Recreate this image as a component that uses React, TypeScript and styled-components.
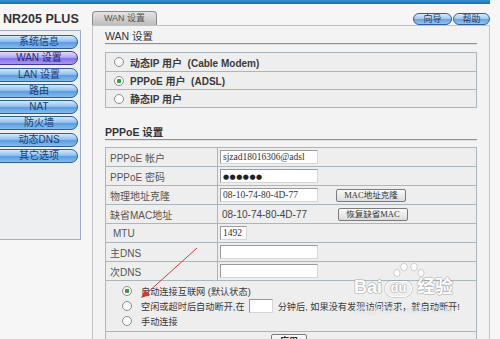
import React from 'react';
import styled, { createGlobalStyle, css } from 'styled-components';

const GlobalStyle = createGlobalStyle`
  html, body {
    margin: 0;
    padding: 0;
    background: #f6f6f6;
    overflow: hidden;
  }
  body {
    font-family: "Liberation Sans", Arial, "Noto Sans CJK SC", sans-serif;
    color: #333;
  }
`;

const Page = styled.div`
  position: relative;
  width: 500px;
  height: 339px;
  overflow: hidden;
`;

const TopBar = styled.div`
  width: 490px;
  height: 4px;
  background: linear-gradient(#3593d3, #1570b0);
`;

const Body = styled.div`
  display: flex;
`;

const Sidebar = styled.div`
  width: 92px;
  flex-shrink: 0;
`;

const Brand = styled.div`
  padding: 8px 0 0 3px;
  height: 15px;
  font-size: 12.5px;
  font-weight: 700;
  line-height: 15px;
  color: #333;
`;

const MenuPanel = styled.div`
  margin-top: 3px;
  width: 81px;
  height: 210px;
  padding-top: 4px;
  box-sizing: border-box;
  border: 1px solid #9fb0c8;
  border-left: none;
  background: #eeeff1;
  display: flex;
  flex-direction: column;
  gap: 2.3px;
`;

const MenuButton = styled.div<{ $active?: boolean }>`
  margin-left: -12px;
  width: 90px;
  height: 14px;
  box-sizing: border-box;
  border: 1px solid #2d5f9e;
  border-radius: 7px;
  background: linear-gradient(#d6e9fb, #8fc0ee 45%, #5c9ddf 55%, #87bbec);
  font-size: 10px;
  line-height: 12px;
  text-align: center;
  padding-left: 12px;
  color: #1c3f78;
  ${(p) =>
    p.$active &&
    css`
      border-color: #4035a0;
      background: linear-gradient(#e2dcfb, #b3a6f2 45%, #8271e6 55%, #a99bf0);
      color: #2c2270;
    `}
`;

const Main = styled.div`
  width: 398px;
  display: flex;
  flex-direction: column;
`;

const MainHeader = styled.div`
  height: 21px;
  display: flex;
  align-items: flex-end;
  justify-content: space-between;
`;

const Tab = styled.div`
  width: 65px;
  height: 14px;
  box-sizing: border-box;
  border: 1px solid #8a8a8a;
  border-bottom: none;
  border-radius: 4px 4px 0 0;
  background: linear-gradient(#e4e4e4, #bdbdbd);
  font-size: 9px;
  line-height: 13px;
  text-align: center;
  color: #555;
`;

const Tools = styled.div`
  display: flex;
  gap: 1px;
`;

const PillButton = styled.div<{ $w: number }>`
  width: ${(p) => p.$w}px;
  height: 12px;
  box-sizing: border-box;
  border: 1px solid #2d5f9e;
  border-radius: 6px;
  background: linear-gradient(#dcecfb, #9cc7f0 50%, #6aa5e2 55%, #93c2ef);
  font-size: 9px;
  line-height: 10px;
  text-align: center;
  color: #233c6c;
`;

const ContentBox = styled.div`
  height: 320px;
  box-sizing: border-box;
  border: 1px solid #c2c2c2;
  background: #f3f3f3;
  padding: 0 12px;
`;

const SectionTitle = styled.div<{ $bold?: boolean }>`
  padding-top: 4px;
  height: 13px;
  line-height: 13px;
  font-size: 10.5px;
  font-weight: ${(p) => (p.$bold ? 700 : 400)};
  color: #333;
  border-bottom: 2px groove #e2e2e2;
`;

const RadioBox = styled.div`
  margin-top: 7px;
  border: 1px solid #a9b6be;
  background: #eeeeee;
`;

const RadioRow = styled.div`
  height: 18px;
  box-sizing: border-box;
  display: flex;
  align-items: center;
  gap: 6px;
  padding-left: 8px;
  font-size: 10px;
  font-weight: 700;
  color: #3a3a3a;
  & + & {
    border-top: 1px solid #a9b6be;
  }
`;

const Radio = styled.span<{ $checked?: boolean }>`
  width: 8px;
  height: 8px;
  border-radius: 50%;
  border: 1px solid #8c8c8c;
  background: radial-gradient(circle, ${(p) => (p.$checked ? '#3a9a4a 0 2px' : '#fff 0 2px')}, #fff 2.5px);
  flex-shrink: 0;
`;

const PPPoETitle = styled(SectionTitle)`
  margin-top: 14px;
`;

const Table = styled.div`
  margin-top: 6px;
  border: 1px solid #a9b6be;
  border-bottom: none;
  background: #eeeeee;
`;

const Row = styled.div`
  height: 18px;
  display: grid;
  grid-template-columns: 112px 1fr;
  border-bottom: 1px solid #a9b6be;
`;

const Label = styled.div<{ $indent?: number }>`
  display: flex;
  align-items: center;
  padding-left: ${(p) => p.$indent ?? 4}px;
  border-right: 1px solid #a9b6be;
  font-size: 10px;
  color: #555;
`;

const Cell = styled.div`
  display: flex;
  align-items: center;
  padding-left: 2px;
  font-size: 10px;
  color: #444;
`;

const TextInput = styled.div<{ $w: number }>`
  width: ${(p) => p.$w}px;
  height: 14px;
  box-sizing: border-box;
  border: 1px solid #9a9a9a;
  border-right-color: #d6d6d6;
  border-bottom-color: #d6d6d6;
  background: #fff;
  font-family: "Liberation Serif", "Times New Roman", serif;
  font-size: 9.5px;
  line-height: 12px;
  padding-left: 2px;
  color: #333;
  flex-shrink: 0;
  white-space: nowrap;
  overflow: hidden;
`;

const Dots = styled.span`
  font-family: "DejaVu Sans", sans-serif;
  font-size: 7px;
  letter-spacing: 0.5px;
  font-weight: 700;
  color: #222;
`;

const GrayButton = styled.div<{ $gap?: number }>`
  margin-left: ${(p) => p.$gap ?? 0}px;
  width: 70px;
  height: 13px;
  box-sizing: border-box;
  border: 1px solid #7b7b7b;
  border-radius: 2px;
  background: linear-gradient(#fafafa, #dcdcdc);
  font-family: "Liberation Serif", "Noto Sans CJK SC", serif;
  font-size: 8.5px;
  line-height: 11px;
  text-align: center;
  color: #333;
`;

const MacText = styled.span`
  width: 116px;
  padding-left: 2px;
  font-size: 10px;
  color: #444;
`;

const ModeBlock = styled.div`
  padding: 2px 0 3px 16px;
  border-bottom: 1px solid #a9b6be;
`;

const ModeRow = styled.div`
  height: 15px;
  display: flex;
  align-items: center;
  font-size: 9.2px;
  color: #3a3a3a;
  white-space: nowrap;

  ${Radio} {
    margin-right: 9px;
  }
`;

const MinuteInput = styled(TextInput)`
  margin: 0 5px 0 4px;
`;

const ApplyRow = styled.div`
  display: flex;
  justify-content: center;
  padding-top: 2px;
  padding-right: 4px;
`;

const ApplyButton = styled(GrayButton)`
  width: 36px;
  height: 14px;
  font-family: "Noto Sans CJK SC", sans-serif;
  font-weight: 700;
  font-size: 9px;
`;

const Overlay = styled.svg`
  position: absolute;
  left: 0;
  top: 0;
  pointer-events: none;
`;

const Watermark = styled.div`
  position: absolute;
  left: 354px;
  top: 278px;
  display: flex;
  flex-direction: column;
  pointer-events: none;
  color: #fff;
  text-shadow: 1px 0 0 rgba(150, 150, 150, 0.45), -1px 0 0 rgba(150, 150, 150, 0.45),
    0 1px 0 rgba(150, 150, 150, 0.45), 0 -1px 0 rgba(150, 150, 150, 0.45);
`;

const MarkLine = styled.div`
  display: flex;
  align-items: flex-end;
  height: 19px;
  font-family: "Liberation Sans", "Noto Sans CJK SC", sans-serif;
  font-size: 18px;
  font-weight: 700;
  line-height: 19px;
`;

const DuPad = styled.span`
  margin: 0 5px 0 3px;
  width: 27px;
  height: 16px;
  box-sizing: border-box;
  border: 1.5px solid rgba(255, 255, 255, 0.95);
  box-shadow: 0 0 0 1px rgba(150, 150, 150, 0.35);
  border-radius: 8px 8px 9px 9px;
  font-size: 13px;
  line-height: 12px;
  text-align: center;
`;

const MarkUrl = styled.div`
  margin-top: 8px;
  font-size: 10px;
  line-height: 10px;
  letter-spacing: 1.2px;
  color: rgba(255, 255, 255, 0.9);
  text-shadow: 0 0 1px rgba(140, 140, 140, 0.6);
`;

const menu = ['系统信息', 'WAN 设置', 'LAN 设置', '路由', 'NAT', '防火墙', '动态DNS', '其它选项'];

export default function App() {
  return (
    <Page>
      <GlobalStyle />
      <TopBar />
      <Body>
        <Sidebar>
          <Brand>NR205 PLUS</Brand>
          <MenuPanel>
            {menu.map((m) => (
              <MenuButton key={m} $active={m === 'WAN 设置'}>
                {m}
              </MenuButton>
            ))}
          </MenuPanel>
        </Sidebar>
        <Main>
          <MainHeader>
            <Tab>WAN 设置</Tab>
            <Tools>
              <PillButton $w={39}>向导</PillButton>
              <PillButton $w={37}>帮助</PillButton>
            </Tools>
          </MainHeader>
          <ContentBox>
            <SectionTitle>WAN 设置</SectionTitle>
            <RadioBox>
              <RadioRow>
                <Radio />
                动态IP 用户&nbsp;&nbsp;(Cable Modem)
              </RadioRow>
              <RadioRow>
                <Radio $checked />
                PPPoE 用户&nbsp;&nbsp;(ADSL)
              </RadioRow>
              <RadioRow>
                <Radio />
                静态IP 用户
              </RadioRow>
            </RadioBox>

            <PPPoETitle $bold>PPPoE 设置</PPPoETitle>
            <Table>
              <Row>
                <Label>PPPoE 帐户</Label>
                <Cell>
                  <TextInput $w={98}>sjzad18016306@adsl</TextInput>
                </Cell>
              </Row>
              <Row>
                <Label>PPPoE 密码</Label>
                <Cell>
                  <TextInput $w={98}>
                    <Dots>●●●●●●</Dots>
                  </TextInput>
                </Cell>
              </Row>
              <Row>
                <Label>物理地址克隆</Label>
                <Cell>
                  <TextInput $w={98}>08-10-74-80-4D-77</TextInput>
                  <GrayButton $gap={18}>MAC地址克隆</GrayButton>
                </Cell>
              </Row>
              <Row>
                <Label>缺省MAC地址</Label>
                <Cell>
                  <MacText>08-10-74-80-4D-77</MacText>
                  <GrayButton>恢复缺省MAC</GrayButton>
                </Cell>
              </Row>
              <Row>
                <Label $indent={7}>MTU</Label>
                <Cell>
                  <TextInput $w={27}>1492</TextInput>
                </Cell>
              </Row>
              <Row>
                <Label>主DNS</Label>
                <Cell>
                  <TextInput $w={98} />
                </Cell>
              </Row>
              <Row>
                <Label>次DNS</Label>
                <Cell>
                  <TextInput $w={98} />
                </Cell>
              </Row>
              <ModeBlock>
                <ModeRow>
                  <Radio $checked />
                  自动连接互联网 (默认状态)
                </ModeRow>
                <ModeRow>
                  <Radio />
                  空闲或超时后自动断开,在
                  <MinuteInput $w={24} />
                  分钟后, 如果没有发现访问请求，就自动断开!
                </ModeRow>
                <ModeRow>
                  <Radio />
                  手动连接
                </ModeRow>
              </ModeBlock>
              <ApplyRow>
                <ApplyButton>应用</ApplyButton>
              </ApplyRow>
            </Table>
          </ContentBox>
        </Main>
      </Body>

      <Watermark>
        <MarkLine>
          Bai
          <DuPad>du</DuPad>
          经验
        </MarkLine>
        <MarkUrl>jingyan.baidu.com</MarkUrl>
      </Watermark>

      <Overlay width="500" height="339" viewBox="0 0 500 339">
        <g fill="#fff" stroke="rgba(140,140,140,0.45)" strokeWidth="0.8">
          <ellipse cx="397" cy="273" rx="3" ry="3.6" />
          <ellipse cx="404" cy="267" rx="3.2" ry="3.8" />
          <ellipse cx="414" cy="267" rx="3.2" ry="3.8" />
          <ellipse cx="421" cy="273" rx="3" ry="3.6" />
        </g>
        <line x1="197" y1="248" x2="146" y2="294" stroke="#d23a3a" strokeWidth="1" />
        <polygon points="141,298 145,290 150,295" fill="#d23a3a" />
      </Overlay>
    </Page>
  );
}
